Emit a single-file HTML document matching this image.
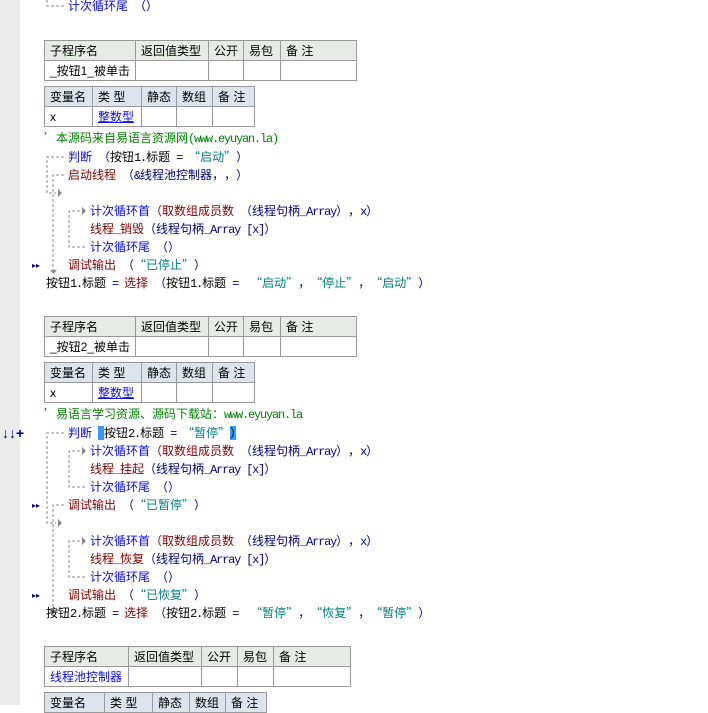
<!DOCTYPE html>
<html><head><meta charset="utf-8"><style>
body{margin:0;width:708px;height:705px;background:#fff;position:relative;overflow:hidden;font-family:"Noto Sans CJK SC",sans-serif;font-size:12px;}
.g{position:absolute;left:0;top:0;width:20px;height:705px;background:#ebebeb}
.l{position:absolute;white-space:pre;line-height:18px;height:18px;color:#000}
.a{font-family:"Liberation Mono",monospace;font-size:12px;letter-spacing:-1.2px}
.f{font-style:normal;display:inline-block;width:12px;text-align:center;line-height:18px;height:18px;vertical-align:top}
.b{color:#0a0ae6}.r{color:#800000}.t{color:#008080}.n{color:#000080}.c{color:#008000}.k{color:#000}
table{position:absolute;border-collapse:collapse;font-size:12px;font-family:"Liberation Sans","Noto Sans CJK SC",sans-serif}
td{border:1px solid #999;height:19px;padding:0 5px;white-space:nowrap}
.h1 td{background:#e6ece5}.h2 td{background:#dde4ed}
.u{color:#0a0ae6;text-decoration:underline}
svg{position:absolute;left:0;top:0}
.m{position:absolute;font-size:8px;color:#000080;left:32px}
.hl{background:linear-gradient(#fff 0 2px,#39f 2px 16px,#fff 16px);color:#000}
</style></head><body>
<div class="g"></div>
<svg width="708" height="705"><g stroke="#888" stroke-dasharray="3,2" fill="none">
<path d="M47 0V6H64"/>
<path d="M64 157H47V193H56"/><path d="M64 175H53V270"/>
<path d="M80 211H69V247H86"/>
<path d="M64 433H47V523H56"/><path d="M80 451H69V487H86"/><path d="M64 505H53V610"/>
<path d="M80 541H69V577H86"/>
</g><g fill="#888">
<path d="M58 189l4 4-4 4z"/><path d="M82 207l4 4-4 4z"/><path d="M50 270h7l-3.5 4z"/>
<path d="M58 519l4 4-4 4z"/><path d="M82 447l4 4-4 4z"/><path d="M82 537l4 4-4 4z"/><path d="M50 610h7l-3.5 4z"/>
</g></svg>
<div class="l b" style="left:68px;top:-3px">计次循环尾<span class="a"> </span><span class="n"><i class="f">（</i><i class="f">）</i></span></div>

<table style="left:44px;top:40px;width:313px"><tr class="h1"><td style="width:79px">子程序名</td><td style="width:62px">返回值类型</td><td style="width:23px">公开</td><td style="width:26px">易包</td><td>备 注</td></tr><tr><td>_按钮1_被单击</td><td></td><td></td><td></td><td></td></tr></table>
<table style="left:44px;top:86px;width:211px"><tr class="h2"><td style="width:37px">变量名</td><td style="width:38px">类 型</td><td style="width:24px">静态</td><td style="width:25px">数组</td><td>备 注</td></tr><tr><td>x</td><td><span class="u">整数型</span></td><td></td><td></td><td></td></tr></table>

<div class="l c" style="left:44px;top:129px"><i class="f">’</i>本源码来自易语言资源网<span class="a">(www.eyuyan.la)</span></div>
<div class="l b" style="left:68px;top:148px">判断<span class="a"> </span><span class="n"><i class="f">（</i></span><span class="k">按钮<span class="a">1.</span>标题</span><span class="a n"> = </span><span class="t"><i class="f">“</i>启动<i class="f">”</i></span><span class="n"><i class="f">）</i></span></div>
<div class="l r" style="left:68px;top:166px">启动线程<span class="a"> </span><span class="n"><i class="f">（</i><span class="a">&amp;</span>线程池控制器<i class="f">，</i><i class="f">，</i><i class="f">）</i></span></div>
<div class="l b" style="left:90px;top:202px">计次循环首<span class="r"><i class="f">（</i>取数组成员数</span><span class="a"> </span><span class="n"><i class="f">（</i>线程句柄<span class="a">_Array</span><i class="f">）</i><i class="f">，</i><span class="a">x</span><i class="f">）</i></span></div>
<div class="l r" style="left:90px;top:220px">线程<span class="a">_</span>销毁<span class="n"><i class="f">（</i>线程句柄<span class="a">_Array [x]</span><i class="f">）</i></span></div>
<div class="l b" style="left:90px;top:238px">计次循环尾<span class="a"> </span><span class="n"><i class="f">（</i><i class="f">）</i></span></div>
<div class="m" style="top:260px">▸▸</div>
<div class="l r" style="left:68px;top:256px">调试输出<span class="a"> </span><span class="n"><i class="f">（</i></span><span class="t"><i class="f">“</i>已停止<i class="f">”</i></span><span class="n"><i class="f">）</i></span></div>
<div class="l" style="left:46px;top:274px">按钮<span class="a">1.</span>标题<span class="a n"> = </span><span class="r">选择</span><span class="a"> </span><span class="n"><i class="f">（</i></span>按钮<span class="a">1.</span>标题<span class="a n"> = </span><span class="a"> </span><span class="t"><i class="f">“</i>启动<i class="f">”</i></span><span class="n"><i class="f">，</i></span><span class="t"><i class="f">“</i>停止<i class="f">”</i></span><span class="n"><i class="f">，</i></span><span class="t"><i class="f">“</i>启动<i class="f">”</i></span><span class="n"><i class="f">）</i></span></div>

<table style="left:44px;top:316px;width:313px"><tr class="h1"><td style="width:79px">子程序名</td><td style="width:62px">返回值类型</td><td style="width:23px">公开</td><td style="width:26px">易包</td><td>备 注</td></tr><tr><td>_按钮2_被单击</td><td></td><td></td><td></td><td></td></tr></table>
<table style="left:44px;top:362px;width:211px"><tr class="h2"><td style="width:37px">变量名</td><td style="width:38px">类 型</td><td style="width:24px">静态</td><td style="width:25px">数组</td><td>备 注</td></tr><tr><td>x</td><td><span class="u">整数型</span></td><td></td><td></td><td></td></tr></table>

<div class="l c" style="left:44px;top:405px"><i class="f">’</i>易语言学习资源、源码下载站：<span class="a">www.eyuyan.la</span></div>
<div class="l n" style="left:2px;top:424px;font-size:14px;font-weight:bold;font-family:'Liberation Sans',sans-serif">↓↓+</div>
<div class="l b" style="left:68px;top:424px">判断<span class="a"> </span><span class="n"><i class="f hl" style="width:6px;text-align:right;overflow:hidden">（</i></span><span class="k">按钮<span class="a">2.</span>标题</span><span class="a n"> = </span><span class="t"><i class="f">“</i>暂停<i class="f">”</i></span><span class="n"><i class="f hl" style="width:6px;text-align:left;overflow:hidden">）</i></span></div>
<div class="l b" style="left:90px;top:442px">计次循环首<span class="r"><i class="f">（</i>取数组成员数</span><span class="a"> </span><span class="n"><i class="f">（</i>线程句柄<span class="a">_Array</span><i class="f">）</i><i class="f">，</i><span class="a">x</span><i class="f">）</i></span></div>
<div class="l r" style="left:90px;top:460px">线程<span class="a">_</span>挂起<span class="n"><i class="f">（</i>线程句柄<span class="a">_Array [x]</span><i class="f">）</i></span></div>
<div class="l b" style="left:90px;top:478px">计次循环尾<span class="a"> </span><span class="n"><i class="f">（</i><i class="f">）</i></span></div>
<div class="m" style="top:500px">▸▸</div>
<div class="l r" style="left:68px;top:496px">调试输出<span class="a"> </span><span class="n"><i class="f">（</i></span><span class="t"><i class="f">“</i>已暂停<i class="f">”</i></span><span class="n"><i class="f">）</i></span></div>
<div class="l b" style="left:90px;top:532px">计次循环首<span class="r"><i class="f">（</i>取数组成员数</span><span class="a"> </span><span class="n"><i class="f">（</i>线程句柄<span class="a">_Array</span><i class="f">）</i><i class="f">，</i><span class="a">x</span><i class="f">）</i></span></div>
<div class="l r" style="left:90px;top:550px">线程<span class="a">_</span>恢复<span class="n"><i class="f">（</i>线程句柄<span class="a">_Array [x]</span><i class="f">）</i></span></div>
<div class="l b" style="left:90px;top:568px">计次循环尾<span class="a"> </span><span class="n"><i class="f">（</i><i class="f">）</i></span></div>
<div class="m" style="top:590px">▸▸</div>
<div class="l r" style="left:68px;top:586px">调试输出<span class="a"> </span><span class="n"><i class="f">（</i></span><span class="t"><i class="f">“</i>已恢复<i class="f">”</i></span><span class="n"><i class="f">）</i></span></div>
<div class="l" style="left:46px;top:604px">按钮<span class="a">2.</span>标题<span class="a n"> = </span><span class="r">选择</span><span class="a"> </span><span class="n"><i class="f">（</i></span>按钮<span class="a">2.</span>标题<span class="a n"> = </span><span class="a"> </span><span class="t"><i class="f">“</i>暂停<i class="f">”</i></span><span class="n"><i class="f">，</i></span><span class="t"><i class="f">“</i>恢复<i class="f">”</i></span><span class="n"><i class="f">，</i></span><span class="t"><i class="f">“</i>暂停<i class="f">”</i></span><span class="n"><i class="f">）</i></span></div>

<table style="left:44px;top:646px;width:307px"><tr class="h1"><td style="width:73px">子程序名</td><td style="width:62px">返回值类型</td><td style="width:25px">公开</td><td style="width:25px">易包</td><td>备 注</td></tr><tr><td><span class="b">线程池控制器</span></td><td></td><td></td><td></td><td></td></tr></table>
<table style="left:44px;top:692px;width:223px"><tr class="h2"><td style="width:49px">变量名</td><td style="width:37px">类 型</td><td style="width:26px">静态</td><td style="width:25px">数组</td><td>备 注</td></tr></table>
</body></html>
